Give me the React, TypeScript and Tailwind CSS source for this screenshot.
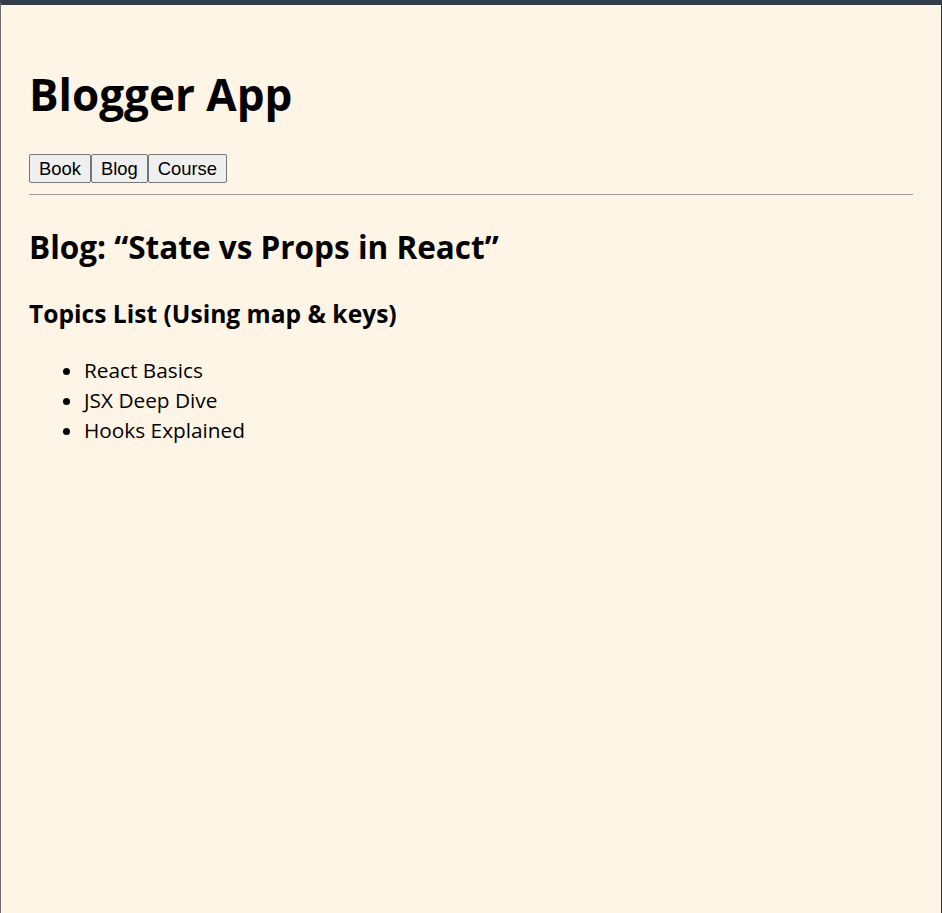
import React from "react";

const topics = ["React Basics", "JSX Deep Dive", "Hooks Explained"];
const tabs = ["Book", "Blog", "Course"];

export default function App() {
  return (
    <div className="min-h-[913px] bg-[#fff5e6] border-t-[5px] border-t-[#343d4c] border-l border-l-[#6e6e6e] border-r border-r-[#2f2f2f] px-[28px] text-black font-['Open_Sans',sans-serif]">
      <h1 className="mt-[67px] text-[44px] leading-[44px] font-bold">Blogger App</h1>

      <div className="mt-[38px] flex">
        {tabs.map((t) => (
          <button
            key={t}
            className="h-[29px] px-[9px] text-[18.4px] leading-[21px] font-['Liberation_Sans',Arial,sans-serif] bg-[#efefef] border border-[#767676] rounded-[2px]"
          >
            {t}
          </button>
        ))}
      </div>

      <hr className="mt-[11px] border-0 border-t border-t-[#9a9a9a]" />

      {/* blog section */}
      <h2 className="mt-[36px] text-[31.5px] leading-[31.5px] font-bold">Blog: “State vs Props in React”</h2>
      <h3 className="mt-[39px] text-[24.6px] leading-[24.6px] font-bold">Topics List (Using map &amp; keys)</h3>

      <ul className="mt-[29px] pl-[55px] list-disc text-[20.8px] leading-[30px]">
        {topics.map((topic) => (
          <li key={topic}>{topic}</li>
        ))}
      </ul>
    </div>
  );
}
